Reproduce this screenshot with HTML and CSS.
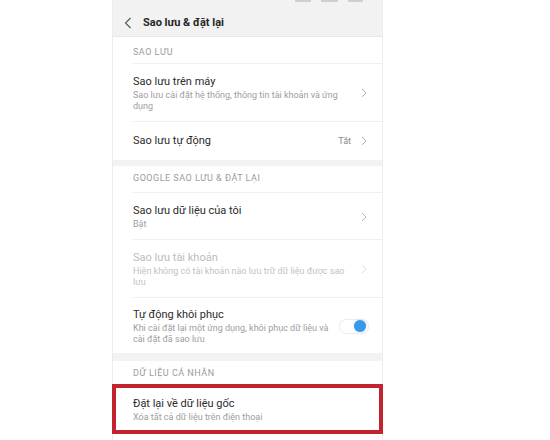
FILE: index.html
```html
<!DOCTYPE html>
<html lang="vi">
<head>
<meta charset="utf-8">
<title>Sao lưu &amp; đặt lại</title>
<link rel="stylesheet" href="styles.css">
</head>
<body>
<div class="screen">
  <header class="topbar">
    <div class="status">
      <span class="st st-a"></span>
      <span class="st st-b"></span>
      <span class="st st-c"></span>
    </div>
    <div class="titlebar">
      <svg class="back" width="8" height="12" viewBox="0 0 8 12"><path d="M6.5 1 L1.5 6 L6.5 11" fill="none" stroke="#555" stroke-width="1.1"/></svg>
      <h1 class="title">Sao lưu &amp; đặt lại</h1>
    </div>
  </header>

  <section class="group group-first">
    <div class="group-label">SAO LƯU</div>
    <div class="row">
      <div class="row-inner">
        <div class="texts">
          <div class="row-title">Sao lưu trên máy</div>
          <div class="row-sub">Sao lưu cài đặt hệ thống, thông tin tài khoản và ứng dụng</div>
        </div>
        <svg class="chev" width="6" height="10" viewBox="0 0 6 10"><path d="M1 1 L5 5 L1 9" fill="none" stroke="#b5b5b5" stroke-width="1"/></svg>
      </div>
    </div>
    <div class="row">
      <div class="row-inner single">
        <div class="texts">
          <div class="row-title">Sao lưu tự động</div>
        </div>
        <span class="value">Tắt</span>
        <svg class="chev" width="6" height="10" viewBox="0 0 6 10"><path d="M1 1 L5 5 L1 9" fill="none" stroke="#b5b5b5" stroke-width="1"/></svg>
      </div>
    </div>
  </section>

  <section class="group">
    <div class="group-label">GOOGLE SAO LƯU &amp; ĐẶT LẠI</div>
    <div class="row">
      <div class="row-inner">
        <div class="texts">
          <div class="row-title">Sao lưu dữ liệu của tôi</div>
          <div class="row-sub">Bật</div>
        </div>
        <svg class="chev" width="6" height="10" viewBox="0 0 6 10"><path d="M1 1 L5 5 L1 9" fill="none" stroke="#b5b5b5" stroke-width="1"/></svg>
      </div>
    </div>
    <div class="row disabled">
      <div class="row-inner">
        <div class="texts">
          <div class="row-title">Sao lưu tài khoản</div>
          <div class="row-sub">Hiện không có tài khoản nào lưu trữ dữ liệu được sao lưu</div>
        </div>
        <svg class="chev" width="6" height="10" viewBox="0 0 6 10"><path d="M1 1 L5 5 L1 9" fill="none" stroke="#dedede" stroke-width="1"/></svg>
      </div>
    </div>
    <div class="row">
      <div class="row-inner with-switch">
        <div class="texts">
          <div class="row-title">Tự động khôi phục</div>
          <div class="row-sub">Khi cài đặt lại một ứng dụng, khôi phục dữ liệu và cài đặt đã sao lưu</div>
        </div>
        <span class="toggle"><span class="knob"></span></span>
      </div>
    </div>
  </section>

  <section class="group group-last">
    <div class="group-label">DỮ LIỆU CÁ NHÂN</div>
    <div class="row marked">
      <div class="row-inner">
        <div class="texts">
          <div class="row-title">Đặt lại về dữ liệu gốc</div>
          <div class="row-sub">Xóa tất cả dữ liệu trên điện thoại</div>
        </div>
      </div>
    </div>
  </section>
</div>
</body>
</html>
```

FILE: styles.css
```css
* {
  box-sizing: border-box;
}

html, body {
  margin: 0;
  padding: 0;
  background: #ffffff;
}

body {
  font-family: Roboto, "Noto Sans", "DejaVu Sans", sans-serif;
  color: #2b2b2b;
  height: 440px;
  overflow: hidden;
}

.screen {
  margin-left: 112px;
  width: 271px;
  height: 440px;
  background: #f3f3f3;
  border-left: 1px solid #ececec;
  border-right: 1px solid #ececec;
  display: flex;
  flex-direction: column;
  gap: 6px;
}

/* top bar */
.topbar {
  background: #f2f2f2;
  height: 37px;
  flex: none;
  border-bottom: 1px solid #e8e8e8;
  display: flex;
  flex-direction: column;
  margin-bottom: -6px;
}

.status {
  height: 3px;
  display: flex;
  justify-content: flex-end;
  gap: 10px;
  padding-right: 19px;
}

.st {
  height: 2px;
  background: #cfcfcf;
  border-radius: 0 0 1px 1px;
}

.st-a { width: 16px; }
.st-b { width: 17px; }
.st-c { width: 15px; }

.titlebar {
  flex: 1;
  display: flex;
  align-items: center;
  padding: 6px 0 0 11px;
  gap: 11px;
}

.back {
  display: block;
}

.title {
  margin: 0;
  font-size: 11px;
  font-weight: 700;
  color: #262626;
}

/* groups */
.group {
  background: #ffffff;
  flex: none;
}

.group-label {
  height: 26px;
  padding: 7px 0 0 20px;
  font-size: 9px;
  line-height: 11px;
  color: #9c9c9c;
  letter-spacing: 0.5px;
}

.group-first .group-label {
  padding-top: 10px;
}

.group-last {
  margin-top: 2px;
  flex: 1;
}

.group-last .group-label {
  height: 23px;
}

.row {
  padding-left: 20px;
}

.row-inner {
  border-top: 1px solid #efefef;
  display: flex;
  align-items: center;
  padding: 10px 15px 9px 0;
  gap: 8px;
}

.row-inner.single {
  padding: 11px 15px 11px 0;
}

.row-inner.with-switch {
  gap: 6px;
  padding: 9px 15px 8px 0;
}

.texts {
  flex: 1;
  min-width: 0;
}

.row-title {
  font-size: 11px;
  line-height: 16px;
  color: #2b2b2b;
}

.row-sub {
  font-size: 9px;
  line-height: 11px;
  color: #9d9d9d;
  padding-right: 4px;
}

.with-switch .row-sub {
  padding-right: 0;
}

.value {
  font-size: 9px;
  color: #8a8a8a;
  margin-right: 2px;
}

.chev {
  display: block;
  flex: none;
}

.disabled .row-title {
  color: #bcbcbc;
}

.disabled .row-sub {
  color: #c2c2c2;
}

/* switch */
.toggle {
  flex: none;
  width: 30px;
  height: 15px;
  border-radius: 8px;
  background: #ffffff;
  border: 1px solid #eeeeee;
  box-shadow: 0 0 2px rgba(0, 0, 0, 0.06);
  display: flex;
  align-items: center;
  justify-content: flex-end;
  padding-right: 2px;
  margin-right: -2px;
}

.knob {
  width: 12px;
  height: 12px;
  border-radius: 50%;
  background: #3a98e8;
  box-shadow: 0 0 2px rgba(58, 152, 232, 0.5);
}

/* highlighted entry */
.row.marked {
  position: relative;
}

.row.marked .row-inner {
  border-top: 0;
  padding: 12px 15px 11px 0;
}

.row.marked::after {
  content: "";
  position: absolute;
  left: -1px;
  right: -1px;
  top: 0;
  bottom: 0;
  border: 4px solid #c3232e;
}
```
